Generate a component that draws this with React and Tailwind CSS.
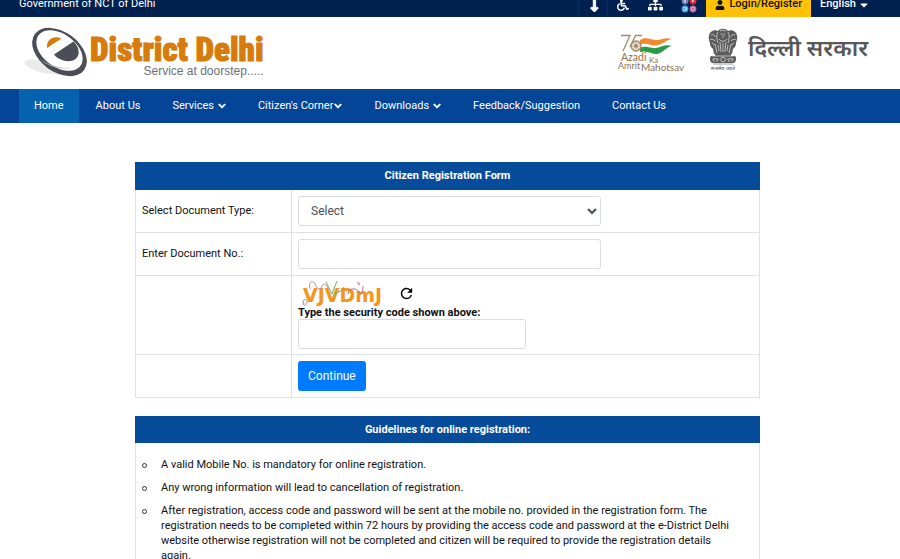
import { useState } from "react";
import {
  FaLevelDownAlt,
  FaWheelchair,
  FaSitemap,
  FaUser,
  FaCaretDown,
  FaChevronDown,
} from "react-icons/fa";
import { MdRefresh } from "react-icons/md";

const menu = [
  { label: "Home", active: true },
  { label: "About Us" },
  { label: "Services", arrow: true, space: true },
  { label: "Citizen's Corner", arrow: true },
  { label: "Downloads", arrow: true, space: true },
  { label: "Feedback/Suggestion" },
  { label: "Contact Us" },
];

const guidelines = [
  "A valid Mobile No. is mandatory for online registration.",
  "Any wrong information will lead to cancellation of registration.",
  "After registration, access code and password will be sent at the mobile no. provided in the registration form. The registration needs to be completed within 72 hours by providing the access code and password at the e-District Delhi website otherwise registration will not be completed and citizen will be required to provide the registration details again.",
];

const SocialIcon = () => (
  <svg viewBox="0 0 18 18" className="size-4">
    <circle cx="4.5" cy="4.5" r="3.8" fill="#6f7fb0" />
    <circle cx="13.5" cy="4.5" r="3.8" fill="#e02a32" />
    <circle cx="4.5" cy="13.5" r="3.8" fill="#4aa8e0" />
    <circle cx="13.5" cy="13.5" r="3.8" fill="#b8629a" />
    <path d="M5.5 2.5h-1v4M3.5 4.5h2" stroke="#fff" strokeWidth=".8" fill="none" />
    <path d="M12.6 3l2.4 1.5-2.4 1.5z" fill="#fff" />
    <path d="M2.5 14.8c2 .8 4-.4 4-2.6l-1.6.2-2-.7" stroke="#e7f4fc" strokeWidth=".9" fill="none" />
    <rect x="11.8" y="11.8" width="3.4" height="3.4" rx="1" stroke="#f6dcea" strokeWidth=".8" fill="none" />
  </svg>
);

const TopBar = () => (
  <div className="flex h-[17px] items-end justify-between overflow-hidden bg-[#00214f] pl-[19px] pr-[30px] text-[11px] text-white">
    <span className="pb-[3px] leading-5">Government of NCT of Delhi</span>
    <div className="flex items-end">
      <a href="#main" aria-label="Skip to main content" className="flex h-[25px] w-[30px] items-center justify-center border-x border-[#06305f]">
        <FaLevelDownAlt size={15} stroke="currentColor" strokeWidth={30} />
      </a>
      <a href="#access" aria-label="Accessibility" className="flex h-[25px] w-[30px] items-center justify-center">
        <FaWheelchair size={12} />
      </a>
      <a href="#sitemap" aria-label="Sitemap" className="flex h-[25px] w-[34px] items-center justify-center">
        <FaSitemap size={15} />
      </a>
      <a href="#social" aria-label="Social media" className="flex h-[25px] w-[34px] items-center justify-center">
        <SocialIcon />
      </a>
      <a href="#login" className="flex h-[25px] items-center gap-1 bg-[#ffc107] px-[9px] font-medium text-[#111]">
        <FaUser size={10} />
        Login/Register
      </a>
      <button type="button" className="flex h-[25px] items-center gap-[2px] pl-[9px] font-medium">
        English
        <FaCaretDown size={12} />
      </button>
    </div>
  </div>
);

const DistrictLogo = () => (
  <a href="#home" className="flex">
    <svg viewBox="0 0 66 54" className="h-[54px] w-[66px] shrink-0">
      <ellipse cx="20" cy="42" rx="20" ry="6" fill="#ebebeb" transform="rotate(14 20 42)" />
      <ellipse cx="35.5" cy="27" rx="30.5" ry="20" fill="#4b4e57" transform="rotate(36 35.5 27)" />
      <path d="M38 3c13 3 21 11 24 23" stroke="#fff" strokeWidth="1.2" fill="none" />
      <ellipse cx="35.5" cy="25.5" rx="26" ry="16.5" fill="#fff" transform="rotate(36 35.5 25.5)" />
      <path d="M23 23c-1-8 6-13 14.500-9.500z" fill="#d67b0c" />
      <path d="M49.500 16.500L30 29.500c4 5 12 8 19 6 8-3 7-13 .5-19z" fill="#4b4e57" />
      <path d="M16 34c8 8 20 11 32 9-12 0-24-3-32-9z" fill="#b9bbc0" opacity=".7" />
    </svg>
    <span className="flex flex-col items-end pt-[10px]">
      <span className="font-['Roboto_Condensed',Roboto,sans-serif] text-[33px] font-black leading-[30px] text-[#d67b0c] [-webkit-text-stroke:1px_#d67b0c]">
        District Delhi
      </span>
      <span className="font-['Liberation_Sans',sans-serif] text-[12px] leading-3 text-[#6d6e78]">Service at doorstep.....</span>
    </span>
  </a>
);

const AzadiLogo = () => (
  <svg viewBox="0 0 70 42" className="h-[42px] w-[70px]" role="img" aria-label="Azadi Ka Amrit Mahotsav">
    <path d="M4 2.500h9L6 18M25 2.500h-6.500L13 14" stroke="#a08a68" strokeWidth="1.300" fill="none" />
    <path d="M23 7c6-4 11 0 17 0 5 0 8-3 15-1-6 1-10 6-16 6.500-7 0-10-3-16-1z" fill="#f28a2c" />
    <path d="M23 15c7-3 11 1 16 0 6-1 9-4 16-2-6 1-9 7-15 8-6 0-10-4-17-2z" fill="#2a9a48" />
    <circle cx="19" cy="13" r="5" stroke="#a08a68" strokeWidth="1.300" fill="#e9e2d5" />
    <circle cx="19" cy="13" r="1.800" fill="#8b8678" />
    <path d="M19 8v10M14 13h10M15.500 9.500l7 7M22.500 9.500l-7 7" stroke="#a08a68" strokeWidth=".5" />
    <g fill="#8a7354" fontFamily="Lato, sans-serif">
      <text x="4" y="28" fontSize="10.500">Azadi</text>
      <text x="32" y="30" fontSize="8">Ka</text>
      <text x="1" y="36" fontSize="9">Amrit</text>
      <text x="24" y="38" fontSize="10">Mahotsav</text>
    </g>
  </svg>
);

const Emblem = () => (
  <svg viewBox="0 0 32 44" className="h-11 w-8" role="img" aria-label="State Emblem of India">
    <g fill="#5c5c5c">
      <path d="M11 3c2-3 8-3 10 0 4-2 9 1 9 5 1 3-1 5-1 8 0 2-2 4-3 5l-1 5H7l-1-5c-1-1-3-3-3-5 0-3-2-5-1-8 0-4 5-7 9-5z" />
      <path d="M4 28h24c2 2 1 6-1 7H5c-2-1-3-5-1-7z" />
      <path d="M8 25h16v3H8z" />
    </g>
    <g stroke="#e4e4e4" strokeWidth=".7" fill="none">
      <path d="M11 4c-2 3-1 9 0 11M21 4c2 3 1 9 0 11M12 11c2 3 6 3 8 0M13.500 6h2M16.500 6h2M16 7v3M13 3c2-1 4-1 6 0" />
      <path d="M4 7c2-1 4 0 4 2M28 7c-2-1-4 0-4 2M3 11c2 1 4 0 5 2M29 11c-2 1-4 0-5 2M5 15l3 2M27 15l-3 2" />
      <path d="M13 14l1 10M19 14l-1 10M8 16l2 9M24 16l-2 9M16 15v9M11 17l1 6M21 17l-1 6" />
      <circle cx="16" cy="31.500" r="2.300" />
      <path d="M5 32c2-2 5-2 7 0M7 31v3M10 31v3M20 32c2-2 5-2 7 0M22 31v3M25 31v3M5 28h22" />
    </g>
    <path d="M6 36h20" stroke="#555" strokeWidth=".6" />
    <text x="16" y="42" fontSize="5" textAnchor="middle" fill="#444" fontFamily="'Noto Sans', sans-serif">सत्यमेव जयते</text>
  </svg>
);

const Captcha = () => (
  <div className="relative h-[27px] w-[90px]">
    <span className="block pl-[5px] pt-[3px] font-['DejaVu_Sans',sans-serif] text-[19px] font-bold leading-6 text-[#f7941d]">
      VJVDmJ
    </span>
    <svg viewBox="0 0 90 27" className="absolute inset-0 h-[27px] w-[90px]" fill="none">
      <path d="M12 9c-2-7 3-10 5-5s5 7 7 2c2-4 5-1 6 3M6 24c-3-6 4-6 3-1-1 3-4 3-4 0" stroke="#b58ea0" />
      <path d="M28 2l6 12 5-13M36 15c3-5 7-1 10-8" stroke="#69ad5b" />
      <path d="M50 14c1-7 9-6 11-2s4 1 4-6M59 3c3-1 4 2 1 2" stroke="#a66e98" />
    </svg>
  </div>
);

const fieldClass = "block h-[30px] rounded-[3px] border border-[#d9dde1] bg-white text-[12px] text-[#495057]";
const cellClass = "border border-[#dee2e6] px-[6px]";
const headClass = "h-[27px] border border-[#074b9b] bg-[#074b9b] text-center text-[11px] font-bold text-white";

const RegistrationForm = () => {
  const [docType, setDocType] = useState("");
  const [docNo, setDocNo] = useState("");
  const [code, setCode] = useState("");

  return (
    <form onSubmit={(e) => e.preventDefault()}>
      <table className="w-full border-collapse">
        <thead>
          <tr>
            <th colSpan={2} className={headClass}>Citizen Registration Form</th>
          </tr>
        </thead>
        <tbody>
          <tr>
            <td className={`${cellClass} w-1/4 py-[6px]`}>
              <label htmlFor="docType">Select Document Type:</label>
            </td>
            <td className={`${cellClass} py-[6px]`}>
              <select
                id="docType"
                value={docType}
                onChange={(e) => setDocType(e.target.value)}
                className={`${fieldClass} w-2/3 pl-2`}
              >
                <option value="">Select</option>
                <option value="aadhaar">Aadhaar Card</option>
                <option value="voter">Voter Card</option>
              </select>
            </td>
          </tr>
          <tr>
            <td className={`${cellClass} py-[6px]`}>
              <label htmlFor="docNo">Enter Document No.:</label>
            </td>
            <td className={`${cellClass} py-[6px]`}>
              <input
                id="docNo"
                type="text"
                value={docNo}
                onChange={(e) => setDocNo(e.target.value)}
                className={`${fieldClass} w-2/3 px-3`}
              />
            </td>
          </tr>
          <tr>
            <td className={cellClass}></td>
            <td className={`${cellClass} pb-[5px] pt-1`}>
              <div className="flex items-center gap-[10px]">
                <Captcha />
                <button type="button" aria-label="Refresh code" className="text-black">
                  <MdRefresh size={17} />
                </button>
              </div>
              <label htmlFor="code" className="block font-bold leading-3">
                Type the security code shown above:
              </label>
              <input
                id="code"
                type="text"
                value={code}
                onChange={(e) => setCode(e.target.value)}
                className={`${fieldClass} w-1/2 px-3`}
              />
            </td>
          </tr>
          <tr>
            <td className={cellClass}></td>
            <td className={`${cellClass} py-[6px]`}>
              <button type="submit" className="block h-[30px] rounded-[3px] bg-[#007bff] px-[10px] text-[12px] text-white">
                Continue
              </button>
            </td>
          </tr>
        </tbody>
      </table>
    </form>
  );
};

const Guidelines = () => (
  <section className="mt-[18px]">
    <h2 className={`${headClass} leading-[26px]`}>Guidelines for online registration:</h2>
    <ul className="flex flex-col gap-2 border border-t-0 border-[#dee2e6] pb-4 pl-[6px] pr-6 pt-[14px] leading-[15px]">
      {guidelines.map((text) => (
        <li key={text} className="flex gap-[14px]">
          <span className="mt-[6px] size-[5px] shrink-0 rounded-full border border-[#333]" />
          <span>{text}</span>
        </li>
      ))}
    </ul>
  </section>
);

const App = () => {
  return (
    <div className="min-h-screen bg-white font-[Roboto,sans-serif] text-[11px] text-[#111]">
      <TopBar />
      <header className="flex h-[72px] items-start justify-between pl-6 pr-8 pt-2">
        <DistrictLogo />
        <div className="flex items-start pt-[3px]">
          <div className="pr-[20px] pt-[5px]">
            <AzadiLogo />
          </div>
          <Emblem />
          <span className="pl-[9px] font-['Noto_Sans',sans-serif] text-[23px] font-semibold leading-[38px] text-[#58585a]">
            दिल्ली सरकार
          </span>
        </div>
      </header>

      <nav className="flex h-[34px] gap-[2px] bg-[#044598] pl-[19px] text-white">
        {menu.map((item) => (
          <a
            key={item.label}
            href="#"
            className={`flex items-center px-[15px] ${item.active ? "bg-[#0562ae]" : ""} ${item.space ? "gap-1" : "gap-px"}`}
          >
            {item.label}
            {item.arrow && <FaChevronDown size={8} stroke="currentColor" strokeWidth={50} />}
          </a>
        ))}
      </nav>

      <main id="main" className="pl-[135px] pr-[140px] pt-[39px]">
        <RegistrationForm />
        <Guidelines />
      </main>
    </div>
  );
};

export default App;
